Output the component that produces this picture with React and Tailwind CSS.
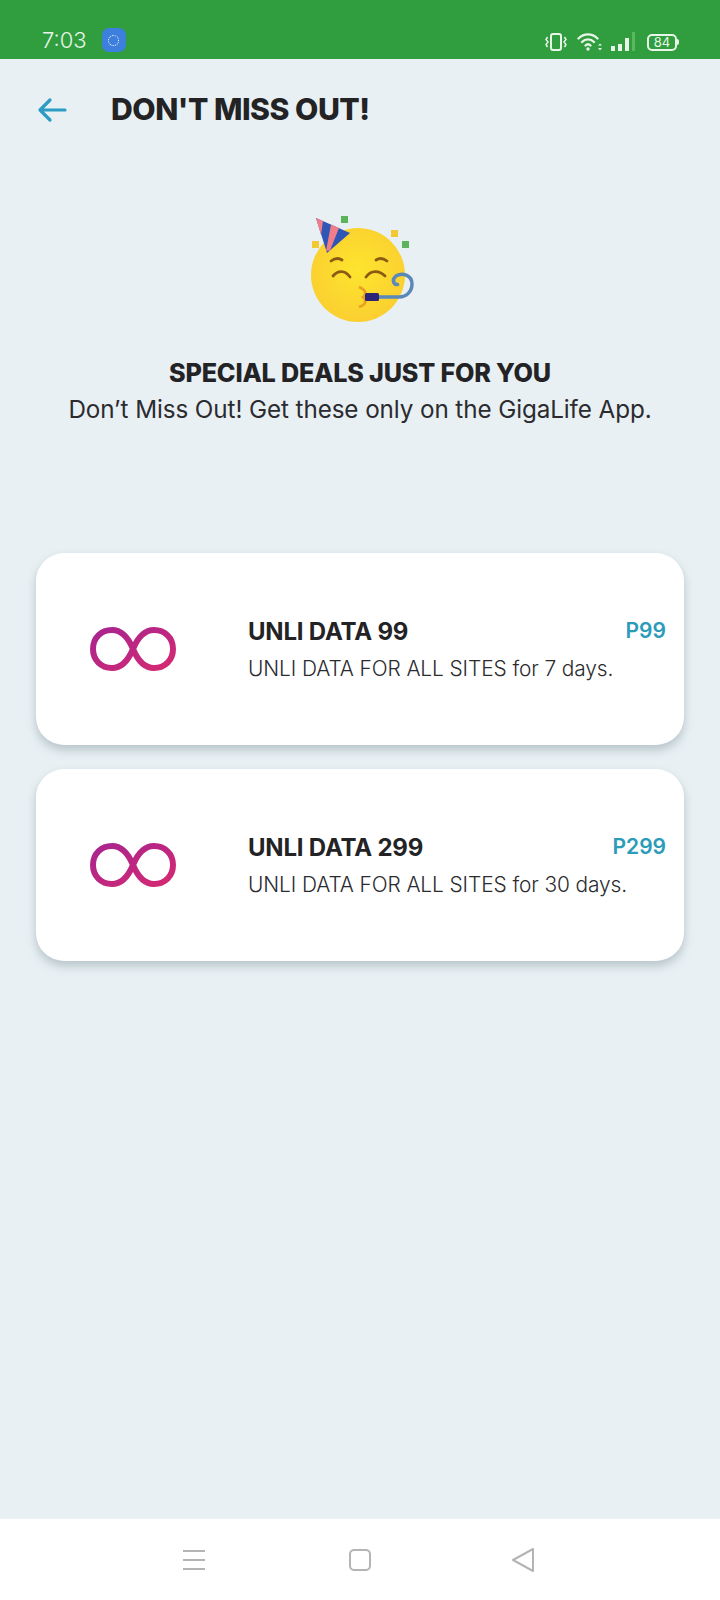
const font = { fontFamily: 'Inter, "Noto Sans", sans-serif' };

const deals = [
  { name: 'UNLI DATA 99', price: 'P99', desc: 'UNLI DATA FOR ALL SITES for 7 days.' },
  { name: 'UNLI DATA 299', price: 'P299', desc: 'UNLI DATA FOR ALL SITES for 30 days.' },
];

const StatusIcons = () => (
  <div className="flex items-center text-[#e8f5e8]">
    <svg width="22" height="20" viewBox="0 0 22 20" fill="none" stroke="currentColor" strokeWidth="1.8">
      <rect x="6" y="2" width="10" height="16" rx="2" strokeWidth="2" />
      <path d="M2.500 5 L1 7.500 L3 10 L1 12.500 L2.500 15 M19.500 5 L21 7.500 L19 10 L21 12.500 L19.500 15" strokeWidth="1.500" />
    </svg>
    <svg className="ml-[10px]" width="26" height="20" viewBox="0 0 26 20" fill="none" stroke="currentColor" strokeLinecap="round">
      <path d="M1.500 6.500 C7 1 15 1 20.500 6.500" strokeWidth="2.400" />
      <path d="M5 10 C8.500 6.500 13.500 6.500 17 10" strokeWidth="2.400" />
      <path d="M8.500 13.500 C10 12 12 12 13.500 13.500" strokeWidth="2.400" />
      <circle cx="11" cy="17" r="1.700" fill="currentColor" stroke="none" />
      <path d="M23 11.500 L25 13.500 L21 13.500 Z M23 18.500 L25 16 L21 16 Z" fill="currentColor" stroke="none" />
    </svg>
    <svg className="ml-[7px]" width="26" height="22" viewBox="0 0 26 22" fill="currentColor">
      <rect x="1" y="15" width="4" height="5" />
      <rect x="8" y="13" width="4" height="7" />
      <rect x="15" y="7" width="4" height="13" />
      <rect x="22" y="1" width="3" height="19" fill="#5cb85c" />
    </svg>
    <div className="ml-[11px] flex items-center">
      <div className="flex h-[17px] w-[30px] items-center justify-center rounded-[5px] border-2 border-[#e8f5e8] text-[13px] leading-none" style={font}>84</div>
      <div className="h-[6px] w-[2px] rounded-r bg-[#e8f5e8]" />
    </div>
  </div>
);

const PartyFace = () => (
  <svg width="106" height="110" viewBox="0 0 106 110">
    <defs>
      <radialGradient id="face" cx="0.5" cy="0.45" r="0.55">
        <stop offset="0" stopColor="#fde52e" />
        <stop offset="1" stopColor="#fbcf30" />
      </radialGradient>
    </defs>
    <circle cx="49" cy="60" r="47" fill="url(#face)" />
    {/* hat */}
    <path d="M7 3 L41 18 L18 38 Z" fill="#2f55b5" />
    <path d="M7 3 L14 6.100 L12 20 Z M22 9.600 L30 13.100 L21 35.400 L17 36 Z" fill="#ef7d8a" />
    {/* confetti */}
    <rect x="32" y="1" width="7" height="7" fill="#5cb35c" />
    <rect x="3" y="26" width="7" height="7" fill="#f2c930" />
    <rect x="82" y="15" width="7" height="7" fill="#f2c930" />
    <rect x="93" y="26" width="7" height="7" fill="#5cb35c" />
    <g fill="none" stroke="#8a5a12" strokeWidth="2.800" strokeLinecap="round">
      <path d="M22 46 C26 43 30 43 33 45" />
      <path d="M67 45 C70 43 74 43 78 46" />
      <path d="M24 61 C29 55 36 55 41 62" />
      <path d="M57 62 C62 55 70 55 76 61" />
    </g>
    <path d="M50 72 C57 75 58 79 54 82 C58 85 57 90 50 92" fill="none" stroke="#e8a020" strokeWidth="2.800" />
    {/* blower */}
    <path d="M70 82 L90 82 C98 82 103 76 103 69 C103 60 93 57 87 61 C82 65 85 71 90 69" fill="none" stroke="#5a88b8" strokeWidth="3.500" />
    <rect x="56" y="78" width="14" height="8" rx="1.500" fill="#2d2478" />
  </svg>
);

const Infinity8 = () => (
  <svg width="86" height="44" viewBox="0 0 86 44" fill="none">
    <defs>
      <linearGradient id="inf" x1="0" y1="0" x2="1" y2="1">
        <stop offset="0" stopColor="#a8248f" />
        <stop offset="1" stopColor="#d42a72" />
      </linearGradient>
    </defs>
    <path d="M43 22 C38 10 32 3 22 3 C11 3 3 11 3 22 C3 33 11 41 22 41 C32 41 38 34 43 22 C48 10 54 3 64 3 C75 3 83 11 83 22 C83 33 75 41 64 41 C54 41 48 34 43 22 Z" stroke="url(#inf)" strokeWidth="6" />
  </svg>
);

const DealCard = ({ deal }) => (
  <div className="flex h-[192px] rounded-[28px] bg-white shadow-[0_5px_10px_rgba(90,115,125,0.35)]">
    <div className="flex w-[212px] shrink-0 items-center pl-[54px]">
      <Infinity8 />
    </div>
    <div className="flex-1 pr-[18px] pt-[63px]">
      <div className="flex items-start justify-between">
        <div className="text-[24px] font-bold leading-[32px] tracking-[-0.2px] text-[#232326]">{deal.name}</div>
        <div className="text-[21px] font-semibold leading-[30px] text-[#2b9cb8]">{deal.price}</div>
      </div>
      <div className="mt-[5px] text-[20.900px] font-light leading-[32px] tracking-[-0.1px] text-[#2b2b30]">{deal.desc}</div>
    </div>
  </div>
);

export default function App() {
  return (
    <div className="flex h-[1600px] w-[720px] flex-col bg-[#e8f0f3]" style={font}>
      {/* status bar */}
      <div className="flex h-[59px] shrink-0 items-end justify-between bg-[#309d3f] pb-[6px] pl-[42px] pr-[41px]">
        <div className="flex items-center">
          <span className="text-[22px] font-light leading-[26px] text-[#e8f5e8]">7:03</span>
          <div className="ml-[15px] flex h-[24px] w-[24px] items-center justify-center rounded-[7px] bg-[#3d7fdc]">
            <div className="h-[11px] w-[11px] rounded-full border border-dotted border-white" />
          </div>
        </div>
        <StatusIcons />
      </div>

      {/* header */}
      <div className="flex h-[102px] shrink-0 items-center pl-[36px]">
        <svg width="32" height="26" viewBox="0 0 32 26" fill="none" stroke="#2b9cc4" strokeWidth="3.200" strokeLinecap="round" strokeLinejoin="round">
          <path d="M4 13 L29 13 M14 3 L4 13 L14 23" />
        </svg>
        <h1 className="ml-[43px] text-[30.200px] font-extrabold tracking-[-0.5px] text-[#232326]">DON'T MISS OUT!</h1>
      </div>

      {/* intro */}
      <div className="flex flex-col items-center pt-[54px]">
        <div className="ml-[4px]"><PartyFace /></div>
        <h2 className="mt-[30px] text-[25.200px] font-extrabold leading-[36px] tracking-[-0.2px] text-[#232326]">SPECIAL DEALS JUST FOR YOU</h2>
        <p className="mt-[1px] text-[24.250px] font-normal leading-[36px] tracking-[-0.1px] text-[#2b2b30]">Don’t Miss Out! Get these only on the GigaLife App.</p>
      </div>

      {/* deals */}
      <div className="mt-[125px] flex flex-col gap-[24px] px-[36px]">
        {deals.map((d) => <DealCard key={d.name} deal={d} />)}
      </div>

      {/* nav bar */}
      <div className="mt-auto flex h-[81px] shrink-0 items-center bg-white pl-[183px]">
        <div className="flex w-[22px] flex-col gap-[7px]">
          <div className="h-[2px] w-[22px] bg-[#b4b4b4]" />
          <div className="h-[2px] w-[22px] bg-[#b4b4b4]" />
          <div className="h-[2px] w-[22px] bg-[#b4b4b4]" />
        </div>
        <div className="ml-[144px] h-[22px] w-[22px] rounded-[5px] border-2 border-[#b4b4b4]" />
        <svg className="ml-[140px]" width="24" height="26" viewBox="0 0 24 26" fill="none" stroke="#b4b4b4" strokeWidth="2" strokeLinejoin="round">
          <path d="M22 2 L2 13 L22 24 Z" />
        </svg>
      </div>
    </div>
  );
}
